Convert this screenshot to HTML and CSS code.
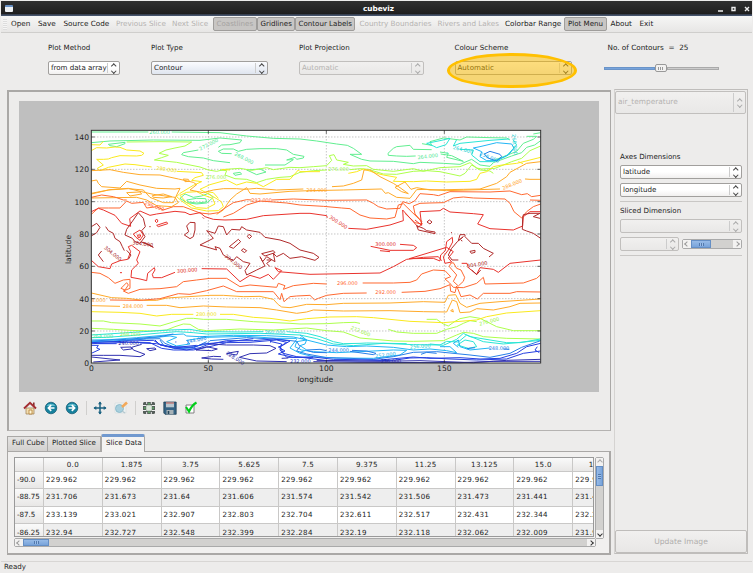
FILE: index.html
```html
<!DOCTYPE html>
<html lang="en">
<head>
<meta charset="utf-8">
<title>cubeviz</title>
<link rel="stylesheet" href="styles.css">
</head>
<body>
<div class="app">
  <header class="titlebar">
    <span class="winicon"></span>
    <b>cubeviz</b>
    <svg class="winbtns" width="36" height="13" viewBox="0 0 36 13"><path d="M2 9h5M16 5.500h3v3h-3zM29 5l4 4M33 5l-4 4" fill="none" stroke="#eee" stroke-width="1.400"/></svg>
  </header>
  <nav class="toolbar">
    <i class="grip"></i><span>Open</span><span>Save</span><span>Source Code</span><span class="off">Previous Slice</span><span class="off">Next Slice</span><span class="on off">Coastlines</span><span class="on">Gridlines</span><span class="on">Contour Labels</span><span class="off country">Country Boundaries</span><span class="off">Rivers and Lakes</span><span>Colorbar Range</span><span class="on">Plot Menu</span><span class="about">About</span><span>Exit</span>
  </nav>
  <section class="options">
    <div class="opt"><label>Plot Method</label><div class="combo white w71">from data array<i></i></div></div>
    <div class="opt"><label>Plot Type</label><div class="combo blue w117">Contour<i></i></div></div>
    <div class="opt"><label>Plot Projection</label><div class="combo dis w125">Automatic<i></i></div></div>
    <div class="opt"><label>Colour Scheme</label><div class="combo w117">Automatic<i></i></div><div class="ellipse"></div></div>
    <div class="opt"><label class="contours">No. of Contours &nbsp;= &nbsp;25</label><div class="slider"><i class="fill"></i><i class="knob"></i><i class="rest"></i></div></div>
  </section>
  <main>
    <div class="left">
      <section class="plotframe">
        <svg class="figure" width="580" height="291" viewBox="19 101 580 291">
          <rect x="19" y="101" width="580" height="291" fill="#bfbfbf"/>
          <rect x="91.3" y="130.3" width="449.4" height="232.7" fill="#fff"/>
          <g class="map" transform="translate(60 120) scale(.33333)">
            <g class="dots"><path d="M445 31V729M799 31V729M1153 31V729M94 51H1442M94 148H1442M94 245H1442M94 342H1442M94 439H1442M94 536H1442M94 633H1442"/></g>
            <g class="c-green">
              <path d="M94 36H265M335 36L480 38 560 48 640 55 720 57 770 63 830 72 862 76 880 85 905 103 870 103 905 118 930 123 1000 124 1060 131 1080 127 1150 130 1200 133 1235 118 1260 135 1290 139 1300 128 1355 108 1385 98 1400 82 1424 75 1442 62"/>
              <path d="M415 90L370 98 365 104 385 110 430 114 460 122 510 128M475 94L490 87 520 87 535 94 560 88 600 86 650 86 680 90 700 103 732 109 730 114 710 118 705 112 680 120 700 119 675 135 615 135M475 94L485 100 515 101"/>
              <path d="M94 68L150 63 280 60 420 61 480 54 545 60 540 68 510 74 485 75 475 82M145 73L195 67 195 71 170 80 150 77ZM520 160L540 157 545 162 525 166ZM560 150L600 147 618 156 590 164Z"/>
              <path d="M1067 108L1040 109 1010 108 985 106 984 100 1000 85 1010 80 1050 76 1060 88 1115 89M1142 102L1175 107 1210 124 1160 112 1165 100 1140 96M1086 71L1115 76 1110 65 1150 54 1200 60 1220 51 1290 53 1340 54 1350 60M1420 42L1442 38M1400 49L1430 49 1420 58 1390 70 1370 94 1330 110 1290 125"/>
              <path d="M360 235L375 222 400 232 425 228 445 220 460 232 440 249 410 252 380 248ZM380 240L410 235 437 236 440 246 410 249 385 246Z"/>
            </g>
            <g class="c-lime">
              <path d="M200 66L300 65 395 66 375 78 345 84 318 90 297 100 325 106 305 113 283 120 350 127 420 141 445 150 470 154 495 148 540 145 575 151 620 143 640 149 690 142 720 143 760 140 800 137 815 121 808 107 822 104 830 120 865 127 850 133 880 138 920 137 940 148 1000 154 1060 146 1090 154 1140 143 1200 140 1230 128 1250 144 1265 147 1305 145 1355 125 1385 115 1410 92 1442 78"/>
              <path d="M480 150L500 152 495 165 525 176 560 178 590 188 620 178 660 172 690 170 720 157 760 152 800 150M870 149L900 146 925 148 970 162 1010 163 1060 154 1100 152 1140 155 1200 168 1215 160 1235 135 1260 150 1290 153 1300 160"/>
              <path d="M94 603L130 603 155 608 240 612 300 618 340 606 380 595 400 595 430 598 500 598 580 605 690 610 720 612 800 611 850 608 885 607 900 610M985 628L1010 636 1060 640 1130 640 1160 628 1190 620 1210 610 1230 602 1250 605M1100 598H1130L1150 612 1165 618 1185 604 1200 596 1230 590 1260 595 1280 605 1310 620 1360 632 1442 632"/>
              <path d="M94 625L160 628 210 631 270 633 320 630 345 620 370 612 390 613 415 628 440 632 540 627 640 630 740 624 800 632 850 636 900 654 1000 663 1060 664 1150 662 1190 645 1210 637 1240 640 1270 650 1340 655 1442 657"/>
            </g>
            <g class="c-yellow">
              <path d="M94 92L110 83 140 84 165 81 180 82 200 90 240 93 252 100 245 106 230 108 180 107 155 113 145 117 130 118 110 118 130 135 112 145 120 152 145 142 195 132 225 134 275 141M350 154L425 158 430 166 405 173 395 181 425 185 400 196 360 220 350 230 365 243 395 264 440 273 475 272 490 260 484 245 460 230 420 208 450 194 500 180 530 195 560 186 590 190 610 200 650 178 690 178 715 150 720 155 780 155M865 160L890 155 910 147 950 160 970 165 1010 172 1000 184 1060 185 1100 183 1160 186 1230 184 1250 178 1260 160 1280 155 1300 140 1320 136 1370 130 1442 112"/>
              <path d="M130 64L120 75 94 74M485 148L510 150M360 226L380 248 410 263 440 265 465 252 458 235 430 225 410 215 380 217ZM440 215L460 218 475 235M1375 125L1389 131"/>
              <path d="M94 575L180 577 240 580 290 588 335 583 400 583M480 583L520 583 580 592 630 595 690 603 740 596 810 591 890 590 940 593 990 598 1050 604 1150 608 1200 604 1250 600 1280 590 1340 579 1442 572"/>
            </g>
            <g class="c-orange">
              <path d="M94 183L110 180 115 190 125 200 180 204 200 184 240 195 290 205 345 207 360 205 350 225 340 248 310 248 270 232 250 210 205 206 145 210 94 220"/>
              <path d="M94 152L150 149 190 157 240 164 300 165 355 177 400 187 410 194 390 210 430 218 460 210 490 206 530 206 555 208 590 205 650 210 730 207M816 200L850 198 880 190 905 180 912 150 930 150 960 170 1000 190 1020 203 1045 221 1025 215 1005 202 1035 186 1053 208 1070 203 1110 210 1210 208 1260 207 1310 190 1340 170 1350 157 1400 130 1442 125"/>
              <path d="M94 222L150 209 205 205 240 214 280 223 345 232 355 248 335 260 290 257 260 240 230 232 94 234M200 218L240 216 245 222 210 228ZM277 227L310 222 335 230 310 234 280 232ZM370 177L385 178 388 184 375 185Z"/>
              <path d="M470 283L490 270 510 240 530 222 560 203 570 220 600 222 690 214 750 212 850 210 965 207 976 220 985 218 1010 232 1050 235 1070 209 1100 208 1160 212 1320 207M1395 177L1410 178 1442 178"/>
              <path d="M94 519L155 533 200 535 250 541 290 541 320 534 450 526 490 526 550 530 600 529 640 538 655 554 665 561 690 563 740 553 800 554 850 550 990 549 1090 545 1155 547 1165 526 1187 524 1200 550 1220 562 1260 550 1320 545 1442 537"/>
              <path d="M94 557L180 559M260 556L320 556 360 563 430 558 500 561 600 563 650 570 710 580 740 576 760 570 850 573 990 572 1090 575 1160 576 1177 540 1190 545 1200 578 1230 576 1250 566 1300 570 1350 560 1380 550 1442 549M1172 572L1178 568 1180 576Z"/>
            </g>
            <g class="c-deep">
              <path d="M94 283L115 264 145 264 180 264 200 243 215 250 250 247 260 264 290 260 310 270 340 260 370 260 420 279 450 282 475 278 495 264 520 248 560 239 575 240M635 240L700 237 800 241 920 240 940 250 955 260 980 267 1020 265 1028 245 1048 251 1065 242 1080 221 1120 224 1135 227 1170 215 1290 216 1350 213 1385 224 1402 221 1415 230 1442 226"/>
              <path d="M150 540L240 541 300 536 355 521 390 523 440 512 490 498 530 515 600 515 640 515 660 539 665 520 672 545 690 530 710 528 750 526 764 540 775 535 800 526 850 520 920 519M1025 517L1095 514 1140 506 1170 494 1172 514 1185 518 1190 498 1203 530 1230 525 1252 537 1270 520 1350 520 1370 515 1442 516"/>
              <path d="M94 457L120 460 145 473 165 490 190 480 210 478 210 505 190 513 205 520 240 508 300 506 350 500 370 485 410 480 450 475 500 475 540 500 570 495 650 502 655 490 675 497 670 508 700 497 760 490 800 492M908 489L1000 489 1050 487 1070 480 1085 462 1120 450 1155 452 1172 470 1155 477 1168 488 1180 502 1210 503 1250 490 1270 472 1275 492 1390 489 1430 475 1442 464"/>
              <path d="M490 291L520 280 560 255 600 243 680 249 720 255 790 259 845 264 870 266 900 285 930 294 980 297 1005 292 1015 255 1030 251 1080 300 1087 312 1065 308 1035 280M1086 305L1065 282 1060 258 1080 250 1110 249 1150 248 1180 234 1210 231 1240 234 1335 237 1350 250 1362 275 1385 294 1400 275 1420 260 1442 252M1410 240L1442 241"/>
              <path d="M94 232L125 225 160 230 170 233 190 240 200 240M183 505L200 488 205 495 195 510ZM1180 428L1190 445 1203 450 1214 472 1210 484 1195 498 1180 484 1190 465 1168 440 1172 430Z"/>
            </g>
            <g class="c-red">
              <path d="M94 275L115 265 130 270 165 286 185 310 212 319 209 296 240 273 270 286 290 282 345 274 375 277 390 284 420 278 435 290 460 298 495 300 560 298 610 287 720 280 750 280 800 287 802 293M865 325L920 328 990 315 1030 302 1028 270 1075 322 1085 312M1065 300L1085 316 1080 275 1140 272 1150 265 1170 276 1240 281 1270 284 1253 312 1290 326 1360 330 1388 318 1390 290 1410 275 1442 275"/>
              <path d="M94 421L115 440 150 446 155 432 180 422 203 418 212 395 205 380 215 376 240 395 230 420 235 430 215 450 213 472 240 477 260 482 263 460 283 443 285 450 277 463 280 473 305 473 345 457M425 446L500 447 540 485 570 466 600 475 625 463 640 478 665 452 645 443 655 455 750 463 960 459 1000 440 1040 418 1090 412 1135 410 1145 422M1205 430L1221 430 1225 443 1250 463 1260 443 1300 448 1315 457 1350 430 1442 420"/>
              <path d="M932 379L990 391 1060 391 1070 383 1060 376 1020 373M960 392L990 395M1048 416L1120 415 1140 423 1142 405 1156 392 1160 365 1177 352 1178 366 1165 390 1150 410 1155 430 1175 426 1165 414 1180 395 1160 382ZM220 342L240 330 250 345 240 361 228 352ZM233 345L242 345 240 352 234 352ZM180 458H186M428 292L432 296M285 303L290 297 294 303 290 308ZM290 316L320 306 323 311 295 320Z"/>
            </g>
            <g class="c-dark">
              <path d="M94 320L110 310 120 322 110 338 94 348M137 320L145 332 160 340 165 355 180 365 187 380 193 392M195 345L200 328 220 300 235 278 250 295 256 320 245 332 255 350 240 370 225 365 217 355ZM248 366L280 382 268 374 245 367M125 393L115 405 130 425M200 391L213 405 205 418M373 345L386 335 380 318 390 307 405 308 405 330 400 350 390 356ZM420 375L460 355 440 332 465 340 475 318 490 320 500 345 515 328 540 330 545 320 560 330 600 337 615 352 660 360 690 370 720 390 760 400 777 412 765 421 725 410 690 415 670 400 650 410 640 400 645 425 620 410 608 425 600 410 615 438 590 450 560 465 555 452 570 430 550 425 530 410 520 422 490 405 480 385 465 380 470 390ZM508 380L535 358 542 365 520 385ZM544 391L550 386 560 392 554 398ZM562 349L567 343 575 349 568 356ZM605 401L640 392 645 398 615 408ZM620 420L634 420 620 430 630 440M1070 317L1090 325 1100 332 1125 336 1125 341 1075 330ZM1101 306L1108 300 1116 306 1110 312ZM1176 420L1165 405 1175 385 1192 365 1210 350 1195 362 1200 344 1215 344 1215 350 1235 370 1255 370 1270 385 1300 400 1287 411M1230 394L1245 391 1245 397 1234 400ZM1388 294L1390 284 1410 280 1440 280 1420 290 1440 295M1388 294L1387 328 1400 333 1420 340 1442 355M1176 420L1195 420M1235 450L1250 464 1262 450M1173 338H1176M1203 361L1207 363M268 320H272"/>
            </g>
            <g class="c-cyan">
              <path d="M94 645L190 639 250 635 330 630 390 628 430 635 540 636 610 635M680 635L740 640 780 650 820 665 850 671 900 670 920 669 1040 671M1110 672L1150 676 1190 658 1210 640 1230 650 1260 655 1290 660 1340 668 1380 668 1442 657"/>
              <path d="M94 653L140 652 210 647 300 639 350 635 400 638 440 642 600 640 720 645 770 656 820 672 880 677 970 670 1060 674 1140 675 1160 664 1195 666 1220 645 1270 665 1330 672 1442 661"/>
              <path d="M1192 675L1215 660 1240 665 1250 680 1225 685ZM1100 70L1140 62 1170 55 1158 74 1130 83 1120 78ZM1190 59L1180 78 1200 70 1290 61 1348 57M1200 88L1240 90 1235 105 1260 125 1300 125 1340 107 1370 75 1360 60M1160 99H1163"/>
            </g>
            <g class="c-sky">
              <path d="M94 660L150 659 230 653 320 645 370 642 380 648 420 650 520 646 620 647 700 651 740 660 710 665 705 680 725 690 760 695 830 698 900 695 1000 690 1040 691 1020 705 940 715 830 714 760 710 720 700 690 684 710 658"/>
              <path d="M94 665L160 663 250 656 330 648 350 652 320 665 350 678 390 672 380 661 440 652 560 649 650 655 710 655M720 645L740 660 800 675 860 680 920 678 1000 682 1060 690 1110 687 1160 692 1190 698 1170 680 1140 680M1195 682L1180 670 1195 660 1200 680 1230 690 1290 684"/>
              <path d="M1240 84L1265 95 1260 110 1280 122 1310 122 1345 105 1362 85 1355 72 1310 68 1260 80ZM720 653L740 660 735 672 720 677 740 690 720 697"/>
            </g>
            <g class="c-azure">
              <path d="M94 667L170 664 260 657 300 656 315 670 340 680 370 684 400 680 440 672 450 662 560 653 660 658 710 664 720 680 710 693 740 702 800 713 870 715 940 718 1000 710 1060 697 1130 695 1230 705 1290 712 1350 700 1385 682 1442 662"/>
              <path d="M300 660L310 675 345 686 400 684 440 665M94 663L200 658 300 650 340 642M740 690L780 688 800 692M876 691L920 693 948 700 940 704 870 694M740 691L760 697 800 698M1220 686L1245 683M1273 102L1290 94 1320 103 1325 110 1310 123 1284 114ZM1348 688L1330 687M1083 703L1100 697 1130 700"/>
            </g>
            <g class="c-blue">
              <path d="M94 668L180 664 280 661 300 673 335 683 380 690 420 683 440 675 500 662 580 662 640 657 690 663 670 675 655 681 675 693 655 702 700 712 760 711 820 718 960 720 1060 711 1110 715 1200 713 1260 717 1320 715 1370 700 1400 680 1442 670"/>
              <path d="M94 671L200 667 270 668 305 685 340 690 400 690 440 682 500 668 570 667 650 660 680 667 660 680 670 700 710 710 800 722 900 723 1000 721 1050 714 1100 713 1170 717 1250 720 1340 717 1390 700 1442 693"/>
              <path d="M94 676L115 676 110 684 120 688 94 700M115 671H170M240 669L290 671 320 680 400 682 430 672 500 666 580 656M285 660L300 675 350 682 410 676M630 664L665 672 660 690 680 712 760 712M1432 680L1425 690 1438 698M346 666H349M630 667H632"/>
            </g>
            <g class="c-navy">
              <path d="M94 706L130 706 180 706 240 710 255 703 220 690 215 682 245 673M94 711L180 720 100 726M182 682L213 681 215 687 190 690ZM260 686L285 684 288 688 270 692ZM408 690L440 680 472 687 455 692ZM425 714L460 709 483 710M425 714L455 717 490 718M500 700L535 694 530 705ZM538 712L570 701 620 699 648 685 630 677 580 675 500 675 450 672M538 712L590 723 680 725M770 721L960 724 1080 722 1240 728 1340 721 1442 718M760 725L900 727 1200 728 1300 724 1442 724M665 715L685 714"/>
            </g>
            <g class="labels">
              <text class="t-green" x="268" y="41">260.000</text><text class="t-green" transform="translate(421 92)rotate(-27)">272.000</text><text class="t-green" transform="translate(522 105)rotate(27)">268.000</text><text class="t-yellow" transform="translate(288 149)rotate(8)">280.000</text><text class="t-lime" x="437" y="177">276.000</text><text class="t-deep" x="574" y="246">292.000</text><text class="t-orange" x="739" y="215">284.000</text><text class="t-lime" x="805" y="153">276.000</text><text class="t-green" transform="translate(1073 118)rotate(-7)">264.000</text><text class="t-cyan" transform="translate(1178 87)rotate(13)">264.000</text><text class="t-cyan" transform="translate(1356 43)rotate(85)">260.000</text><text class="t-sky" transform="translate(1258 105)rotate(23)">256.000</text><text class="t-orange" transform="translate(1330 210)rotate(-23)">288.000</text>
              <text class="t-red" transform="translate(806 294)rotate(33)">300.000</text><text class="t-red" x="946" y="379">300.000</text><text class="t-deep" transform="translate(252 253)rotate(20)">296.000</text><text class="t-dark" transform="translate(217 373)rotate(7)">304.000</text><text class="t-dark" transform="translate(131 385)rotate(39)">304.000</text><text class="t-dark" transform="translate(493 410)rotate(39)">304.000</text><text class="t-dark" transform="translate(1222 443)rotate(-9)">304.000</text>
              <text class="t-red" transform="translate(351 459)rotate(-5)">300.000</text><text class="t-deep" x="831" y="496">296.000</text><text class="t-deep" x="946" y="522">292.000</text><text class="t-orange" x="94" y="545">8.000</text><text class="t-orange" x="188" y="564">284.000</text><text class="t-yellow" x="408" y="589">280.000</text><text class="t-lime" transform="translate(871 627)rotate(22)">272.000</text><text class="t-lime" transform="translate(1259 617)rotate(-15)">276.000</text><text class="t-green" x="98" y="655">264.000</text><text class="t-lime" x="180" y="648">268.000</text><text class="t-cyan" x="614" y="642">260.000</text><text class="t-navy" x="175" y="674">240.000</text><text class="t-azure" transform="translate(380 672)rotate(-13)">244.000</text><text class="t-navy" transform="translate(497 702)rotate(33)">228.000</text><text class="t-blue" x="690" y="728">232.000</text><text class="t-azure" x="805" y="695">244.000</text><text class="t-sky" transform="translate(946 714)rotate(-7)">252.000</text><text class="t-navy" x="962" y="728">236.000</text><text class="t-cyan" transform="translate(1050 686)rotate(-4)">256.000</text><text class="t-azure" x="1286" y="691">248.000</text>
            </g>
            <rect x="94" y="31" width="1348" height="698" fill="none" stroke="#333" stroke-width="3"/>
            <path d="M445 31v10M799 31v10M1153 31v10M445 729v-10M799 729v-10M1153 729v-10M94 51h10M94 148h10M94 245h10M94 342h10M94 439h10M94 536h10M94 633h10M1442 51h-10M1442 148h-10M1442 245h-10M1442 342h-10M1442 439h-10M1442 536h-10M1442 633h-10" stroke="#222" stroke-width="2"/>
          </g>
          <g class="axis">
            <g text-anchor="end"><text x="89" y="139.800">140</text><text x="89" y="172.100">120</text><text x="89" y="204.500">100</text><text x="89" y="236.800">80</text><text x="89" y="269.100">60</text><text x="89" y="301.500">40</text><text x="89" y="333.800">20</text><text x="89" y="366">0</text></g>
            <g text-anchor="middle"><text x="91.500" y="371.300">0</text><text x="208.300" y="371.300">50</text><text x="326.300" y="371.300">100</text><text x="444.300" y="371.300">150</text><text x="315.400" y="381.500">longitude</text><text transform="translate(70.600 249.500) rotate(-90)">latitude</text></g>
          </g>
        </svg>
        <div class="icons">
          <svg viewBox="0 0 14 14"><path d="M3 7h8v6H3z" fill="#f3ddb0" stroke="#9c7b4a" stroke-width=".7"/><path d="M6 9h3v4H6z" fill="#fff7d8" stroke="#b07d35" stroke-width=".8"/><path d="M10 1.500h1.600V5H10z" fill="#8b3030"/><path d="M1 7.500L7 1.700l6 5.800" fill="none" stroke="#a32e32" stroke-width="1.900"/></svg>
          <svg viewBox="0 0 14 14"><circle cx="7" cy="7" r="5.800" fill="#16819d" stroke="#0c5670" stroke-width=".7"/><path d="M2.500 5a5 4 0 0 1 9 0z" fill="#62bdce"/><path d="M10.500 7H5M7.200 4.200L4.400 7l2.800 2.800" fill="none" stroke="#fff" stroke-width="1.700"/></svg>
          <svg viewBox="0 0 14 14"><circle cx="7" cy="7" r="5.800" fill="#16819d" stroke="#0c5670" stroke-width=".7"/><path d="M2.500 5a5 4 0 0 1 9 0z" fill="#62bdce"/><path d="M3.500 7H9M6.800 4.200L9.600 7 6.800 9.800" fill="none" stroke="#fff" stroke-width="1.700"/></svg>
          <i class="sep"></i>
          <svg viewBox="0 0 14 14"><path d="M7 1v12M1 7h12" stroke="#1b6181" stroke-width="1.500"/><path d="M7 .5l2 2.800H5zM7 13.500l2-2.800H5zM.5 7l2.800-2v4zM13.500 7l-2.800-2v4z" fill="#1b6181"/></svg>
          <svg viewBox="0 0 14 14"><path d="M1 2h11v10H1z" fill="#eef2f2" stroke="#d5dcdc" stroke-width=".6"/><circle cx="5.500" cy="7.500" r="4" fill="#a7cfdd" stroke="#83b4c5" stroke-width=".8"/><path d="M8 6L13 1.500" stroke="#f3a95a" stroke-width="2.600"/><path d="M8 10l3 2" stroke="#b5c8cf" stroke-width="1.500"/></svg>
          <i class="sep"></i>
          <svg viewBox="0 0 14 14"><rect x="1" y="1" width="12" height="12" rx="1.500" fill="#555d59"/><rect x="4.200" y="4.200" width="5.600" height="5.600" fill="#dce9db"/><path d="M1 4.500h3M10 4.500h3M1 9.500h3M10 9.500h3M4.700 1v2M9.300 1v2M4.700 11v2M9.300 11v2" stroke="#eee" stroke-width="1"/><path d="M7 1.500l1.500 2h-3zM7 12.500l1.500-2h-3zM1.500 7l2-1.500v3zM12.500 7l-2-1.500v3z" fill="#63b36b"/></svg>
          <svg viewBox="0 0 14 14"><path d="M.8 1h12.400v12.300H2L.8 12z" fill="#356384" stroke="#17384e" stroke-width=".7"/><path d="M3 1.300h8v5H3z" fill="#b9c6ce"/><path d="M3 2h8" stroke="#c65b52"/><path d="M3.500 9h7v4.300h-7z" fill="#a7b2b7"/><path d="M4.700 10h1.600v3H4.700z" fill="#26465b"/></svg>
          <svg viewBox="0 0 14 14"><path d="M2 4h8v8H2z" fill="#fff" stroke="#777" stroke-width=".9"/><path d="M2 6l3 4.500Q8 4 12.500 1.500" fill="none" stroke="#00cf19" stroke-width="2.100"/></svg>
        </div>
      </section>
      <div class="tabs"><span>Full Cube</span><span>Plotted Slice</span><span class="active">Slice Data</span></div>
      <section class="tabframe">
        <div class="tablewrap">
          <table>
            <tr><th></th><th>0.0</th><th>1.875</th><th>3.75</th><th>5.625</th><th>7.5</th><th>9.375</th><th>11.25</th><th>13.125</th><th>15.0</th><th>16.875</th></tr>
            <tr><th>-90.0</th><td>229.962</td><td>229.962</td><td>229.962</td><td>229.962</td><td>229.962</td><td>229.962</td><td>229.962</td><td>229.962</td><td>229.962</td><td>229.962</td></tr>
            <tr><th>-88.75</th><td>231.706</td><td>231.673</td><td>231.64</td><td>231.606</td><td>231.574</td><td>231.542</td><td>231.506</td><td>231.473</td><td>231.441</td><td>231.41</td></tr>
            <tr><th>-87.5</th><td>233.139</td><td>233.021</td><td>232.907</td><td>232.803</td><td>232.704</td><td>232.611</td><td>232.517</td><td>232.431</td><td>232.344</td><td>232.26</td></tr>
            <tr><th>-86.25</th><td>232.94</td><td>232.727</td><td>232.548</td><td>232.399</td><td>232.284</td><td>232.19</td><td>232.118</td><td>232.062</td><td>232.009</td><td>231.96</td></tr>
          </table>
        </div>
        <div class="vbar"><b class="up"></b><i></i><s></s><b class="down"></b></div>
        <div class="hbar"><b class="prev dim"></b><i></i><s></s><b class="next"></b></div>
      </section>
    </div>
    <aside>
      <div class="combo dis big">air_temperature<i></i></div>
      <label class="axes">Axes Dimensions</label>
      <div class="combo white">latitude<i></i></div>
      <div class="combo white second">longitude<i></i></div>
      <hr>
      <label class="sliced">Sliced Dimension</label>
      <div class="combo dis">&nbsp;<i></i></div>
      <div class="pair"><div class="combo dis">&nbsp;<i></i></div><div class="hbar mini"><b class="prev dim"></b><i></i><s></s><b class="next dim"></b></div></div>
      <hr>
      <button>Update Image</button>
    </aside>
  </main>
  <footer>Ready</footer>
</div>
</body>
</html>
```
FILE: styles.css
```css
* { box-sizing: border-box; }
body { margin: 0; background: #fff; }
.app { width: 754px; height: 573px; padding: 1px; display: flex; flex-direction: column; overflow: hidden; font: 7.1px/10px "DejaVu Sans", sans-serif; color: #222; background: #edeceb; border-right: 1px solid #fff; }
.titlebar { flex: none; height: 15px; display: grid; grid-template-columns: 30px 1fr 36px; align-items: center; padding: 0 0 0 4px; background: linear-gradient(#303030, #202020 80%, #1c1c1c 86%, #45536b 92%); color: #fff; text-align: center; }
.titlebar b { font-size: 7.3px; padding-left: 6px; }
.winicon { width: 8px; height: 7px; background: #eef1f4; border-top: 2px solid #6991c5; border-radius: 1px; }
.toolbar { flex: none; height: 17px; display: grid; grid-template-columns: 10px 27px 25.500px 52.500px 56px 40.500px 44px 38px 65px 78px 67.500px 59px 46.500px 29px 40px; align-items: center; background: linear-gradient(#f6f6f5, #e7e6e5); border-bottom: 1px solid #cfcecc; white-space: nowrap; font-size: 7.25px; }
.grip { width: 4px; height: 11px; margin-left: 2px; background: repeating-linear-gradient(#ddd 0 1px, #f5f5f5 1px 2px); }
.off { color: #b5b3b1; }
.on { justify-self: start; height: 14px; line-height: 12px; padding: 0 2.500px 0 3px; background: #c8c6c4; border: 1px solid #9f9d9b; border-radius: 2px; font-size: 7.1px; }
.on.off { color: #a5a3a1; }
.options { flex: none; height: 57px; display: grid; grid-template-columns: 103px 148px 155.500px 153px 130px; padding: 10px 0 0 47px; }
.opt { position: relative; display: flex; flex-direction: column; gap: 8px; align-items: flex-start; }
.opt label { white-space: pre; }
.opt .contours { font-size: 7.25px; }
.combo { position: relative; height: 14px; line-height: 12px; padding-left: 2px; border: 1px solid #a19f9d; border-radius: 2px; background: linear-gradient(#fafafa, #ebeae9); white-space: nowrap; overflow: hidden; }
.combo.white { background: linear-gradient(#fff 50%, #f1f0ef); }
.combo.blue { background: linear-gradient(#fbfcff, #dfe5ef); }
.combo.dis { color: #b5b3b1; border-color: #c1bfbd; background: linear-gradient(#f1f0ef, #e9e8e7); }
.combo i { position: absolute; right: 0; top: 1px; bottom: 1px; width: 12px; border-left: 1px solid #ccc; }
.combo i::before, .combo i::after { content: ""; position: absolute; left: 4px; width: 2.500px; height: 2.500px; border: solid #444; transform: rotate(45deg); }
.combo i::before { bottom: calc(50% + .5px); border-width: 1px 0 0 1px; }
.combo i::after { top: calc(50% + .5px); border-width: 0 1px 1px 0; }
.combo.dis i::before, .combo.dis i::after { border-color: #aaa; }
.w71 { width: 72px; } .w117 { width: 117px; } .w125 { width: 125px; }
.ellipse { position: absolute; left: -8px; top: 10px; width: 130px; height: 35px; border: 3px solid #ffc000; border-radius: 50%; background: rgba(255,192,0,.5); }
.slider { height: 14px; width: 115px; margin-left: -4px; display: flex; align-items: center; }
.slider .fill { width: 51px; height: 3px; background: #77a4dc; border: 1px solid #6b94c8; }
.slider .rest { flex: 1; height: 3px; background: #ccc; border: 1px solid #aaa; }
.slider .knob { width: 12px; height: 8px; border: 1px solid #999; border-radius: 2px; background: repeating-linear-gradient(90deg, #999 0 1px, #f4f4f4 1px 2px) center/5px 3px no-repeat #f2f1f0; }
main { flex: none; height: 466px; display: flex; gap: 3px; padding-left: 6px; }
.left { width: 604px; }
.plotframe { height: 341px; border: 1px solid #aaa8a6; border-top-width: 2px; border-left-width: 2px; border-bottom-color: #b5b3b1; padding: 9px 0 0 10px; }
.figure { display: block; }
.map path { fill: none; stroke-linejoin: round; }
.map g path { stroke-width: 3; }
.dots path { stroke: #aaa; stroke-width: 3; stroke-dasharray: 3 6; }
.c-green { stroke: #60ee90; } .c-lime { stroke: #adff4b; } .c-yellow { stroke: #fae91c; } .c-orange { stroke: #ffaa28; } .c-deep { stroke: #ff6830; } .c-red { stroke: #e9322c; } .c-dark { stroke: #b02a2a; } .c-cyan { stroke: #29e5d5; } .c-sky { stroke: #20b5f5; } .c-azure { stroke: #267de8; } .c-blue { stroke: #243ee0; } .c-navy { stroke: #3030b0; }
.labels text { font: 15px "DejaVu Sans", sans-serif; stroke: none; }
.t-green { fill: #50e894; } .t-lime { fill: #a0f250; } .t-yellow { fill: #f0df10; } .t-orange { fill: #ff9e20; } .t-deep { fill: #ff6530; } .t-red { fill: #e02b25; } .t-dark { fill: #a52222; } .t-cyan { fill: #20cfd2; } .t-sky { fill: #20aee8; } .t-azure { fill: #267de8; } .t-blue { fill: #243ee0; } .t-navy { fill: #2525a5; }
.axis text { font: 7.6px "DejaVu Sans", sans-serif; fill: #222; }
.icons { display: flex; align-items: center; height: 32px; padding-left: 4px; gap: 7px; }
.icons svg { width: 14px; height: 14px; flex: none; }
.sep { width: 1px; height: 14px; background: #d0cfcd; margin: 0 -.5px; }
.tabs { height: 20px; padding-top: 3px; display: flex; align-items: flex-end; }
.tabs span { height: 15px; line-height: 12px; padding: 0 4px; border: 1px solid #aaa8a6; border-bottom: 0; background: linear-gradient(#e4e3e2, #d3d1cf); white-space: nowrap; width: 41px; }
.tabs span:nth-child(2) { width: 53px; border-left: 0; }
.tabs .active { width: 44px; height: 18px; line-height: 12px; border-top: 3px solid #7199cf; background: #f4f3f2; border-radius: 2px 2px 0 0; margin-bottom: -1px; position: relative; }
.tabframe { height: 104px; border: 1px solid #aaa8a6; border-right-width: 2px; border-bottom-width: 2px; background: #f1f0ef; padding: 5px 4px 0 6px; display: grid; grid-template-columns: 580px 10px; grid-template-rows: 81px 10px; gap: 0 1px; }
.tablewrap { overflow: hidden; border: 1px solid #999; width: 580px; height: 80px; background: #fff; }
table { border-collapse: separate; border-spacing: 0; table-layout: fixed; width: 617px; letter-spacing: .32px; }
td, th { width: 58.800px; height: 17.650px; padding: 0 0 0 2px; border-right: 1px solid #c9c8c7; border-bottom: 1px solid #c9c8c7; font-weight: 400; text-align: left; line-height: 10px; }
th { background: linear-gradient(#fafafa, #e8e7e6); text-align: center; padding: 0; }
th:first-child { width: 29px; text-align: left; padding-left: 2px; letter-spacing: 0; }
tr:first-child th { height: 13.500px; padding-top: 1px; }
tr:nth-child(odd) td { background: #eee; }
.hbar, .vbar { display: flex; border: 1px solid #aaa; border-radius: 2px; background: #d2d1cf; }
.hbar { height: 9px; width: 582px; grid-column: 1 / 3; }
.vbar { width: 9px; height: 82px; flex-direction: column; }
.hbar b, .vbar b { display: flex; align-items: center; justify-content: center; background: #f3f2f1; flex: none; width: 8px; height: 8px; }
.hbar b { height: 7px; } .vbar b { width: 7px; }
.hbar b::before, .vbar b::before { content: ""; width: 3px; height: 3px; border: solid #333; border-width: 1px 0 0 1px; transform: rotate(-45deg); }
.vbar .up::before { transform: rotate(45deg); border-color: #aaa; }
.vbar .down::before { transform: rotate(225deg); }
.hbar .next::before { transform: rotate(135deg); }
.hbar .dim::before { border-color: #999; }
.hbar i { width: 26px; background: repeating-linear-gradient(90deg, #5279ad 0 1px, #9dbfe9 1px 2px) center/5px 3px no-repeat, linear-gradient(#9dbfe9, #729fd8); outline: 1px solid #658fc5; outline-offset: -1px; }
.vbar i { height: 20px; background: repeating-linear-gradient(#5279ad 0 1px, #9dbfe9 1px 2px) center/3px 5px no-repeat, linear-gradient(90deg, #9dbfe9, #729fd8); outline: 1px solid #658fc5; outline-offset: -1px; }
.hbar s, .vbar s { flex: 1; }
aside { width: 134px; height: 465px; margin-top: -1px; border: 1px solid #bfbdbb; border-left-color: #d5d3d1; padding: 0 5px; display: flex; flex-direction: column; }
aside > * { flex: none; }
aside .big { height: 23px; line-height: 20px; margin: 1px -4px 0 -5px; font-size: 7.4px; }
.axes { margin: 38px 0 3px; }
.second { margin-top: 4px; }
hr { width: 100%; margin: 4px 0; height: 1px; border: 0; background: #c9c7c5; }
.sliced { margin: 0 0 3px; }
.pair { display: flex; justify-content: space-between; margin-top: 4px; align-items: center; }
.pair .combo { width: 59px; }
.hbar.mini { width: 60px; height: 10px; }
.hbar.mini i { width: 20px; }
.hbar.mini b { height: 8px; }
button { margin: auto -5px 0; height: 23px; border: 1px solid #bfbdbb; border-radius: 2px; background: linear-gradient(#f1f0ef, #e8e7e6); color: #b0aeac; font: 7.6px "DejaVu Sans", sans-serif; }
footer { flex: 1; margin-top: 5px; border-top: 1px solid #d8d6d4; padding: 0 0 0 3px; line-height: 10px; }
```
